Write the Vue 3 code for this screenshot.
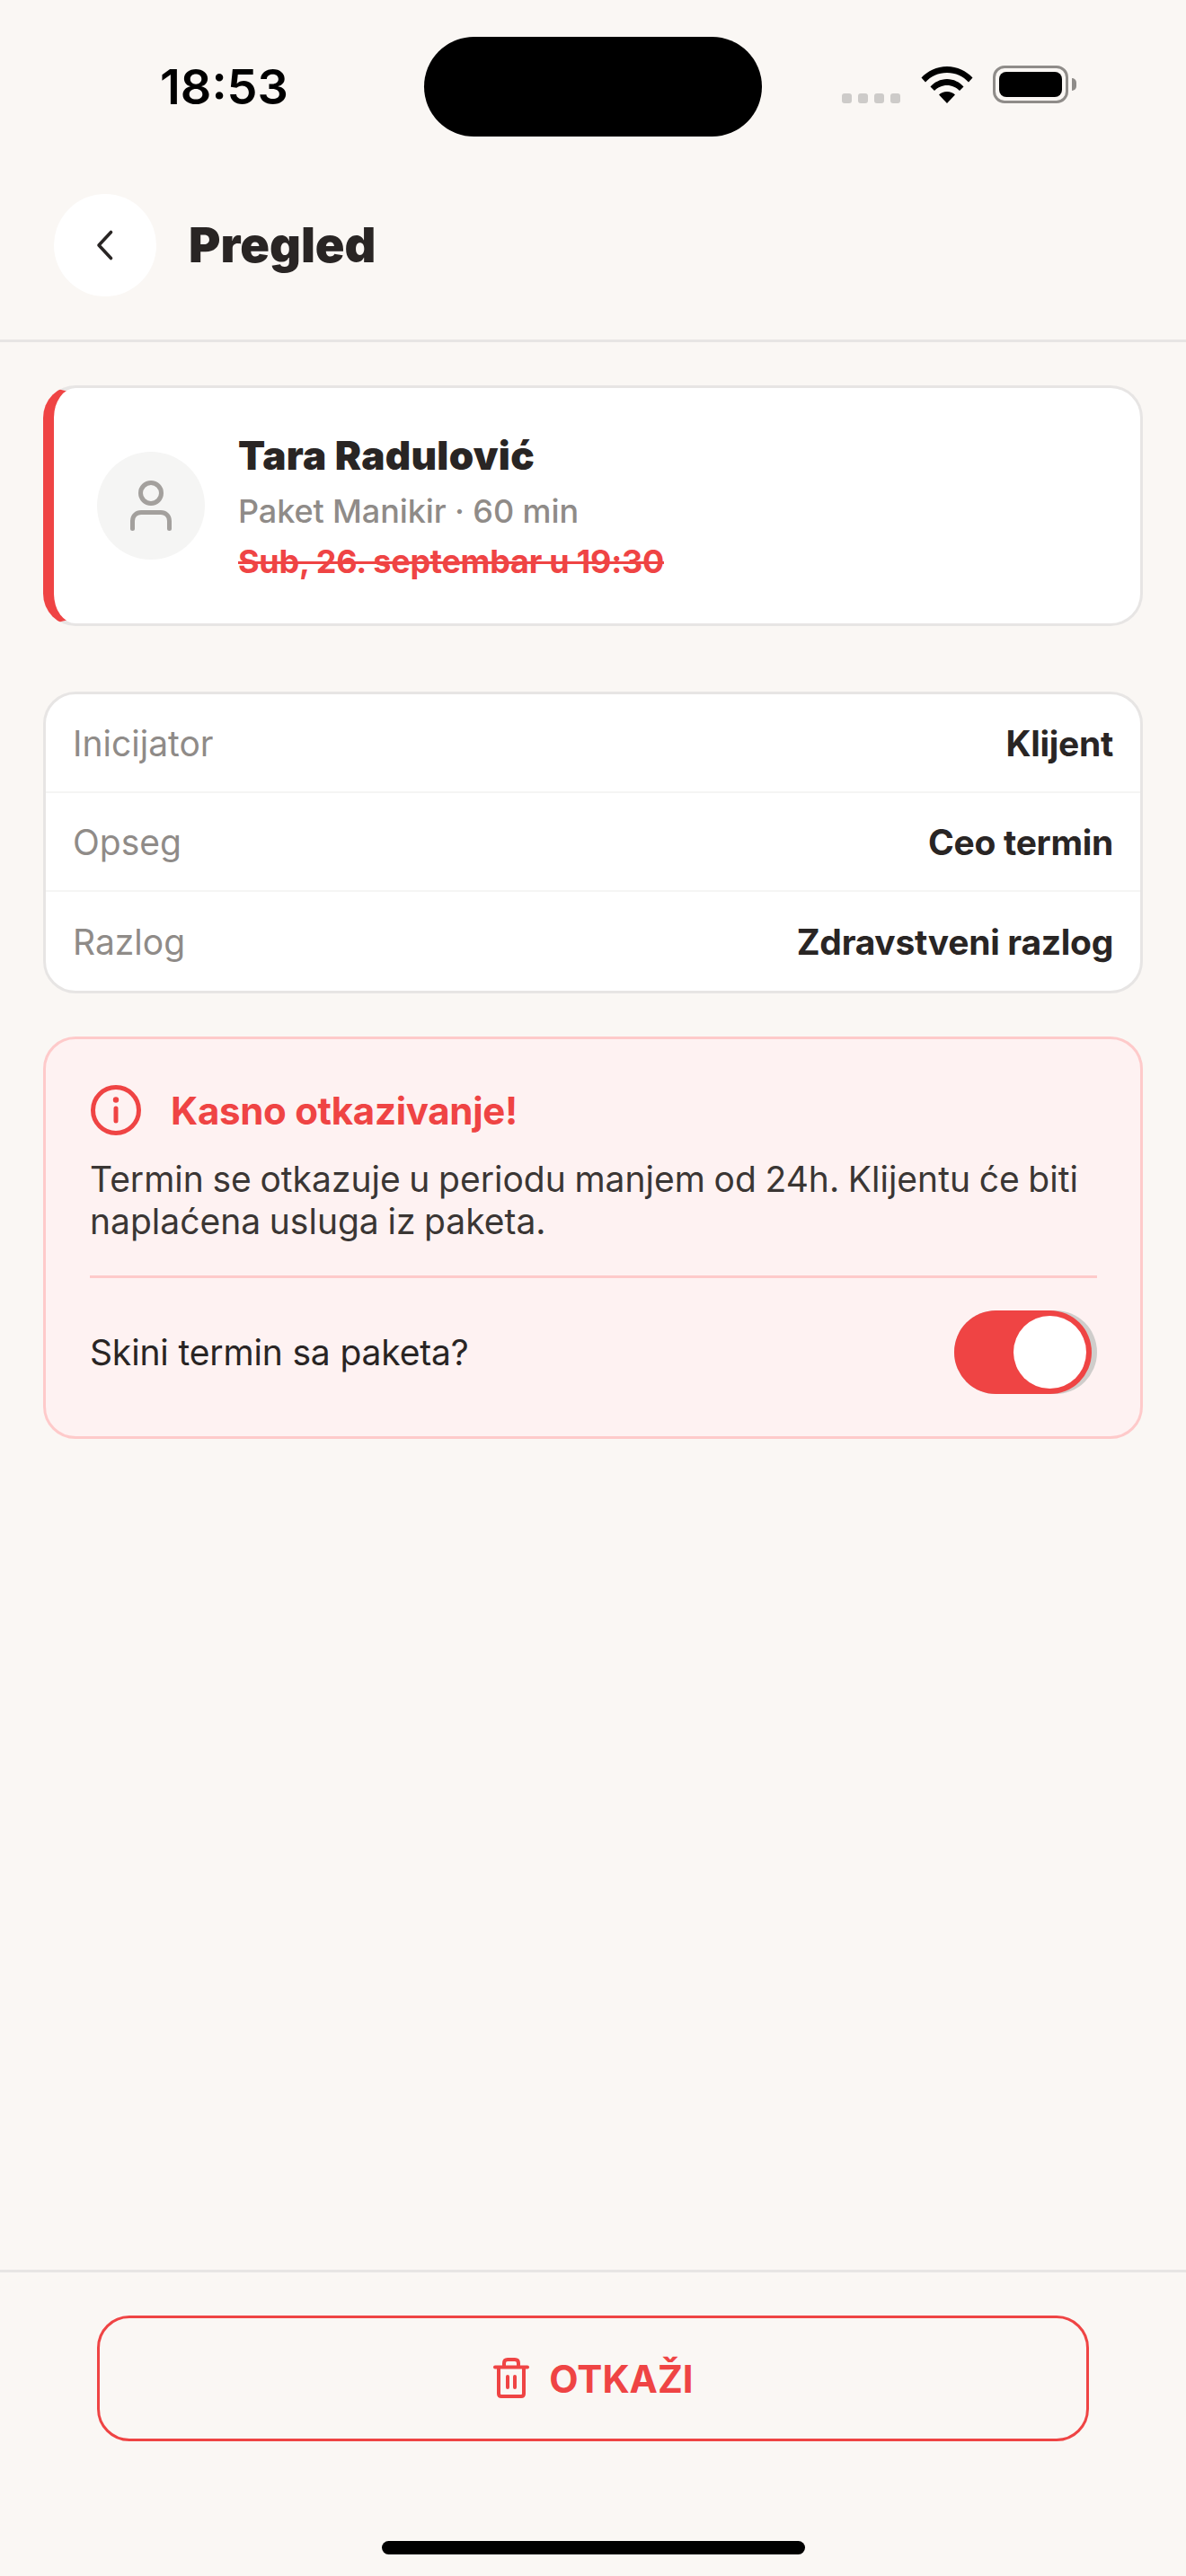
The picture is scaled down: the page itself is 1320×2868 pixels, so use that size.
<template>
  <div class="screen">
    <!-- status bar -->
    <div class="status-bar">
      <span class="time">18:53</span>
      <div class="island"></div>
      <div class="status-icons">
        <div class="signal">
          <i v-for="n in 4" :key="n"></i>
        </div>
        <svg class="wifi" width="58" height="42" viewBox="0 0 58 42">
          <path d="M0.500 13.500C7.500 6 17.500 1 29 1s21.500 5 28.500 12.500L53 18.500C47 12 38.500 8 29 8S11 12 5 18.500Z" fill="#000" />
          <path d="M10.500 23.500C15 18.500 21.500 15 29 15s14 3.500 18.500 8.500L43 28C39.500 24.500 34.500 22 29 22s-10.500 2.500-14 6Z" fill="#000" />
          <path d="M20 32.500C22.200 30.200 25.400 29 29 29s6.800 1.200 9 3.500L29 42Z" fill="#000" />
        </svg>
        <div class="battery">
          <div class="battery-body"><div class="battery-fill"></div></div>
          <div class="battery-cap"></div>
        </div>
      </div>
    </div>

    <!-- header -->
    <header class="head">
      <button class="back-btn">
        <svg width="36" height="36" viewBox="0 0 36 36" fill="none">
          <path d="M24.500 3.500L11 18l13.500 14.500" stroke="#292524" stroke-width="3.600" stroke-linecap="round" stroke-linejoin="round" />
        </svg>
      </button>
      <span class="title">Pregled</span>
    </header>

    <main class="content">
      <!-- client card -->
      <section class="client-card">
        <div class="avatar">
          <svg width="60" height="60" viewBox="0 0 60 60" fill="none">
            <circle cx="30" cy="16" r="11.500" stroke="#a3a09d" stroke-width="5" />
            <path d="M9.500 55.500V47C9.500 41 14 37.500 19 37.500H41C46 37.500 50.500 41 50.500 47V55.500" stroke="#a3a09d" stroke-width="5" stroke-linecap="round" />
          </svg>
        </div>
        <div class="client-info">
          <div class="client-name">Tara Radulović</div>
          <div class="client-sub">Paket Manikir · 60 min</div>
          <div class="client-date">Sub, 26. septembar u 19:30</div>
        </div>
      </section>

      <!-- details -->
      <section class="info-table">
        <div v-for="row in rows" :key="row.label" class="info-row">
          <span class="info-label">{{ row.label }}</span>
          <span class="info-value">{{ row.value }}</span>
        </div>
      </section>

      <!-- late cancel warning -->
      <section class="alert">
        <div class="alert-head">
          <svg width="58" height="58" viewBox="0 0 58 58" fill="none">
            <circle cx="29" cy="29" r="25.500" stroke="#ef4444" stroke-width="5" />
            <path d="M29 27v14" stroke="#ef4444" stroke-width="5" stroke-linecap="round" />
            <circle cx="29" cy="17.500" r="3.200" fill="#ef4444" />
          </svg>
          <span class="alert-title">Kasno otkazivanje!</span>
        </div>
        <p class="alert-text">Termin se otkazuje u periodu manjem od 24h. Klijentu će biti naplaćena usluga iz paketa.</p>
        <div class="alert-toggle-row">
          <span class="toggle-label">Skini termin sa paketa?</span>
          <div class="toggle">
            <div class="toggle-fill">
              <div class="knob"></div>
            </div>
          </div>
        </div>
      </section>
    </main>

    <!-- bottom action -->
    <footer class="footer">
      <button class="cancel-btn">
        <svg width="42" height="48" viewBox="0 0 42 48" fill="none">
          <path d="M3 11.500h36" stroke="#ef4444" stroke-width="4" stroke-linecap="round" />
          <path d="M7 11.500V41c0 2 1 3 3 3h22c2 0 3-1 3-3V11.500" stroke="#ef4444" stroke-width="4" />
          <path d="M13 11V7c0-2.500 1.500-4 4-4h8c2.500 0 4 1.500 4 4v4" stroke="#ef4444" stroke-width="4" />
          <path d="M17 22v12M25 22v12" stroke="#ef4444" stroke-width="4" stroke-linecap="round" />
        </svg>
        <span>OTKAŽI</span>
      </button>
      <div class="home-bar"></div>
    </footer>
  </div>
</template>

<script setup>
const rows = [
  { label: 'Inicijator', value: 'Klijent' },
  { label: 'Opseg', value: 'Ceo termin' },
  { label: 'Razlog', value: 'Zdravstveni razlog' }
]
</script>

<style>
html, body {
  margin: 0;
  background: #faf7f4;
}
</style>

<style scoped>
.screen {
  width: 1320px;
  height: 2868px;
  display: flex;
  flex-direction: column;
  background: #faf7f4;
  font-family: Inter, "Liberation Sans", sans-serif;
  color: #292524;
  overflow: hidden;
}

.status-bar {
  height: 193px;
  box-sizing: border-box;
  padding: 41px 0 0 178px;
  display: flex;
  align-items: flex-start;
  flex-shrink: 0;
}

.time {
  width: 294px;
  margin-top: 24px;
  font-size: 54px;
  line-height: 63px;
  font-weight: 600;
  color: #000;
}

.island {
  width: 376px;
  height: 111px;
  background: #000;
  border-radius: 56px;
}

.status-icons {
  margin-left: 89px;
  margin-top: 32px;
  height: 42px;
  display: flex;
  align-items: flex-end;
}

.signal {
  display: flex;
  gap: 7px;
}

.signal i {
  width: 11px;
  height: 11px;
  border-radius: 3px;
  background: #cdcbc9;
}

.wifi {
  margin-left: 23px;
}

.battery {
  margin-left: 22px;
  display: flex;
  align-items: center;
}

.battery-body {
  width: 84px;
  height: 42px;
  box-sizing: border-box;
  border: 3px solid #8f8c89;
  border-radius: 13px;
  padding: 4px;
}

.battery-fill {
  height: 100%;
  background: #000;
  border-radius: 8px;
}

.battery-cap {
  width: 5px;
  height: 14px;
  margin-left: 4px;
  background: #8f8c89;
  border-radius: 0 5px 5px 0;
}

.head {
  height: 188px;
  box-sizing: border-box;
  flex-shrink: 0;
  padding: 23px 60px 0;
  display: flex;
  align-items: flex-start;
  gap: 36px;
  border-bottom: 3px solid #e7e5e4;
}

.back-btn {
  width: 114px;
  height: 114px;
  padding: 0;
  border: none;
  border-radius: 50%;
  background: #fff;
  display: flex;
  align-items: center;
  justify-content: center;
}

.title {
  font-size: 54px;
  line-height: 114px;
  font-weight: 900;
}

.content {
  flex: 1;
  padding: 48px 48px 0;
  display: flex;
  flex-direction: column;
}

.client-card {
  height: 268px;
  box-sizing: border-box;
  border: 3px solid #e7e5e4;
  border-left: 12px solid #ef4444;
  border-radius: 36px;
  background: #fff;
  display: flex;
  align-items: center;
  padding-left: 48px;
  gap: 37px;
}

.avatar {
  width: 120px;
  height: 120px;
  border-radius: 50%;
  background: #f5f5f4;
  display: flex;
  align-items: center;
  justify-content: center;
}

.client-info {
  display: flex;
  flex-direction: column;
  padding-top: 5px;
}

.client-name {
  font-size: 44px;
  line-height: 58px;
  font-weight: 900;
  letter-spacing: 0.3px;
}

.client-sub {
  margin-top: 5px;
  font-size: 36px;
  line-height: 56px;
  font-weight: 500;
  letter-spacing: -0.1px;
  color: #8f8b88;
}

.client-date {
  font-size: 36px;
  line-height: 56px;
  font-weight: 700;
  letter-spacing: -0.25px;
  color: #ef4444;
  text-decoration: line-through;
}

.info-table {
  margin-top: 73px;
  border: 3px solid #e7e5e4;
  border-radius: 36px;
  background: #fff;
  overflow: hidden;
}

.info-row {
  height: 110px;
  box-sizing: border-box;
  padding: 0 30px;
  display: flex;
  align-items: center;
  justify-content: space-between;
  border-bottom: 2px solid #f5f5f4;
}

.info-row:last-child {
  border-bottom: none;
}

.info-label {
  font-size: 39px;
  color: #8f8b88;
}

.info-value {
  font-size: 39px;
  font-weight: 700;
  letter-spacing: -0.3px;
}

.alert {
  margin-top: 48px;
  height: 448px;
  box-sizing: border-box;
  border: 3px solid #fecaca;
  border-radius: 36px;
  background: #fef2f2;
  padding: 50px 48px 0 49px;
}

.alert-head {
  display: flex;
  align-items: center;
  gap: 32px;
  height: 58px;
}

.alert-title {
  font-size: 42px;
  font-weight: 700;
  letter-spacing: -0.3px;
  color: #ef4444;
}

.alert-text {
  margin: 24px 0 0;
  font-size: 39px;
  line-height: 47px;
  word-spacing: -1.300px;
  color: #3a3634;
}

.alert-toggle-row {
  margin-top: 37px;
  border-top: 3px solid #fecaca;
  padding-top: 36px;
  display: flex;
  align-items: center;
  justify-content: space-between;
}

.toggle-label {
  font-size: 39px;
  letter-spacing: -0.15px;
}

.toggle {
  width: 159px;
  height: 93px;
  background: #cfcdcb;
  border-radius: 47px;
}

.toggle-fill {
  width: 153px;
  height: 93px;
  background: #ef4444;
  border-radius: 47px;
  box-sizing: border-box;
  padding: 6px;
  display: flex;
  justify-content: flex-end;
}

.knob {
  width: 81px;
  height: 81px;
  border-radius: 50%;
  background: #fff;
}

.footer {
  height: 341px;
  box-sizing: border-box;
  flex-shrink: 0;
  border-top: 3px solid #e7e5e4;
  padding: 48px 108px 0;
  display: flex;
  flex-direction: column;
  align-items: center;
}

.cancel-btn {
  width: 100%;
  height: 140px;
  flex-shrink: 0;
  box-sizing: border-box;
  border: 3px solid #ef4444;
  border-radius: 36px;
  background: transparent;
  display: flex;
  align-items: center;
  justify-content: center;
  gap: 21px;
  font-family: inherit;
  font-size: 42px;
  font-weight: 700;
  color: #ef4444;
}

.home-bar {
  width: 471px;
  height: 15px;
  margin-top: 111px;
  background: #000;
  border-radius: 8px;
  flex-shrink: 0;
}
</style>
